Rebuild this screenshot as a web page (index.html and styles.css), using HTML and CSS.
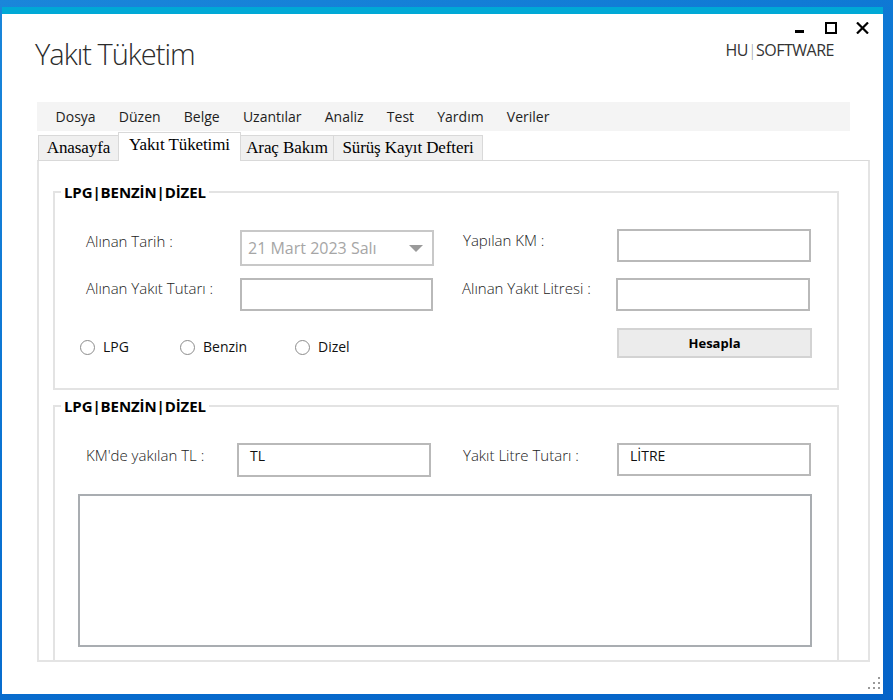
FILE: index.html
```html
<!DOCTYPE html>
<html lang="tr">
<head>
<meta charset="utf-8">
<title>Yakıt Tüketim</title>
<link rel="stylesheet" href="styles.css">
</head>
<body>
<div class="window">
  <div class="header">
    <h1 class="title">Yakıt Tüketim</h1>
    <div class="header-right">
      <svg class="controls" width="74" height="12" viewBox="0 0 74 12">
        <rect x="0" y="8" width="9" height="3" fill="#000"/>
        <rect x="31" y="1" width="10" height="10" fill="none" stroke="#000" stroke-width="2"/>
        <path d="M62 0.5 L73 11.5 M73 0.5 L62 11.5" stroke="#000" stroke-width="2.2" fill="none"/>
      </svg>
      <div class="brand">HU<span class="pipe">|</span>SOFTWARE</div>
    </div>
  </div>

  <nav class="menubar">
    <span class="mi">Dosya</span>
    <span class="mi">Düzen</span>
    <span class="mi">Belge</span>
    <span class="mi">Uzantılar</span>
    <span class="mi">Analiz</span>
    <span class="mi">Test</span>
    <span class="mi">Yardım</span>
    <span class="mi">Veriler</span>
  </nav>

  <div class="tabs">
    <div class="tab t1">Anasayfa</div>
    <div class="tab active t2">Yakıt Tüketimi</div>
    <div class="tab t3">Araç Bakım</div>
    <div class="tab t4">Sürüş Kayıt Defteri</div>
  </div>

  <div class="tabpage">
    <div class="group g1">
      <div class="gtitle">LPG|BENZİN|DİZEL</div>
      <div class="row r1">
        <div class="lbl l1 up2">Alınan Tarih :</div>
        <div class="date">
          <span class="date-text">21 Mart 2023 Salı</span>
          <svg class="arrow" width="14" height="7" viewBox="0 0 14 7"><path d="M0 0 H14 L7 7 Z" fill="#9a9a9a"/></svg>
        </div>
        <div class="lbl l2 up2b">Yapılan KM :</div>
        <div class="tb tb-r"></div>
      </div>
      <div class="row r2">
        <div class="lbl l1">Alınan Yakıt Tutarı :</div>
        <div class="tb tb-l"></div>
        <div class="lbl l2">Alınan Yakıt Litresi :</div>
        <div class="tb tb-r"></div>
      </div>
      <div class="row r3">
        <div class="radios">
          <label class="radio rd1"><span class="circle"></span>LPG</label>
          <label class="radio rd2"><span class="circle"></span>Benzin</label>
          <label class="radio rd3"><span class="circle"></span>Dizel</label>
        </div>
        <div class="btn">Hesapla</div>
      </div>
    </div>

    <div class="group g2">
      <div class="gtitle">LPG|BENZİN|DİZEL</div>
      <div class="row r4">
        <div class="lbl l1b">KM'de yakılan TL :</div>
        <div class="tb tb-tl"><span class="tbtext">TL</span></div>
        <div class="lbl l2b">Yakıt Litre Tutarı :</div>
        <div class="tb tb-r2"><span class="tbtext">LİTRE</span></div>
      </div>
      <div class="multi"></div>
    </div>
  </div>

  <svg class="grip" width="12" height="12" viewBox="0 0 12 12">
    <rect x="10" y="0" width="2" height="2" fill="#9a9a9a"/>
    <rect x="5" y="5" width="2" height="2" fill="#9a9a9a"/>
    <rect x="10" y="5" width="2" height="2" fill="#9a9a9a"/>
    <rect x="0" y="10" width="2" height="2" fill="#9a9a9a"/>
    <rect x="5" y="10" width="2" height="2" fill="#9a9a9a"/>
    <rect x="10" y="10" width="2" height="2" fill="#9a9a9a"/>
  </svg>
</div>
</body>
</html>
```

FILE: styles.css
```css
* { box-sizing: border-box; }

html, body { height: 100%; }

body {
  margin: 0;
  width: 893px;
  height: 700px;
  padding: 7px 10px 6px 2px;
  background: linear-gradient(160deg, #1a86da 0%, #0a73d2 45%, #0563c8 100%);
  font-family: "Open Sans", "Liberation Sans", sans-serif;
  overflow: hidden;
}

.window {
  position: relative;
  width: 881px;
  height: 687px;
  background: #fff;
  border-top: 7px solid #00a9d6;
}

/* header */
.header {
  display: flex;
  height: 88px;
  padding-left: 33px;
}

.title {
  margin: 0;
  padding-top: 21px;
  font-family: "Open Sans", sans-serif;
  font-weight: 300;
  font-size: 29px;
  line-height: 38px;
  letter-spacing: -1px;
  color: #2b2b2b;
}

.header-right {
  margin-left: auto;
  display: flex;
  flex-direction: column;
  align-items: flex-end;
  padding-top: 8px;
  padding-right: 14px;
}

.controls { display: block; }

.brand {
  margin-top: 6px;
  margin-right: 35px;
  font-size: 16px;
  line-height: 20px;
  color: #333;
  letter-spacing: -0.5px;
}

.pipe {
  color: #9a9a9a;
  font-weight: 300;
}

/* menu */
.menubar {
  display: flex;
  margin-left: 35px;
  width: 813px;
  height: 29px;
  padding-left: 7px;
  background: #f4f4f4;
}

.mi {
  padding: 0 11.6px;
  font-size: 14px;
  line-height: 29px;
  color: #1e1e1e;
}

/* tabs */
.tabs {
  display: flex;
  align-items: flex-end;
  height: 29px;
  margin-left: 36px;
}

.tab {
  height: 25px;
  border: 1px solid #d9d9d9;
  border-bottom: none;
  background: #f0f0f0;
  font-family: "Liberation Serif", "Times New Roman", serif;
  font-size: 17px;
  line-height: 23px;
  text-align: center;
  color: #000;
  margin-left: -1px;
  white-space: nowrap;
  letter-spacing: -0.1px;
}

.t1 { width: 81px; margin-left: 0; }
.t2 { width: 123px; }
.t3 { width: 94px; }
.t4 { width: 150px; }

.tab.active {
  position: relative;
  z-index: 1;
  height: 29px;
  margin-bottom: -1px;
  background: #fff;
}

/* tab page */
.tabpage {
  margin-left: 35px;
  width: 833px;
  height: 502px;
  border: 2px solid #e4e4e4;
  border-top: 1px solid #d9d9d9;
  padding: 30px 0 0 14px;
  overflow: hidden;
}

.group {
  width: 786px;
  border: 2px solid #e3e3e3;
  padding-left: 25px;
}

.g1 { height: 199px; }
.g2 { height: 300px; margin-top: 15px; }

.gtitle {
  width: fit-content;
  margin: -11px 0 0 -19px;
  padding: 0 3px;
  background: #fff;
  font-weight: 700;
  font-size: 15px;
  line-height: 20px;
  letter-spacing: -0.1px;
  color: #000;
}

.row {
  display: flex;
  align-items: flex-start;
}

.r1 { margin-top: 27px; padding-left: 6px; }
.r2 { margin-top: 12px; padding-left: 6px; }
.r3 { margin-top: 17px; padding-right: 25px; }
.r4 { margin-top: 27px; padding-left: 6px; }

.lbl {
  font-weight: 300;
  font-size: 15px;
  line-height: 20px;
  color: #222;
  white-space: nowrap;
}

.l1 { width: 154px; }
.l2 { width: 154px; margin-left: 29px; }
.l1b { width: 151px; margin-top: 2px; }
.l2b { width: 154px; margin-left: 32px; margin-top: 2px; }
.up2 { margin-top: 2px; }
.up2b { margin-top: 1px; }

.date {
  display: flex;
  align-items: center;
  width: 194px;
  height: 36px;
  margin-top: 1px;
  border: 2px solid #c8c8c8;
  padding: 0 9px 0 6px;
}

.date-text {
  font-size: 16px;
  color: #a6a6a6;
  white-space: nowrap;
}

.arrow { margin-left: auto; display: block; }

.tb {
  height: 33px;
  border: 2px solid #b9b9b9;
  background: #fff;
}

.tb-l { width: 193px; }
.tb-r { width: 194px; }
.tb-tl { width: 194px; height: 34px; }
.tb-r2 { width: 194px; }

.tbtext {
  display: block;
  padding: 1px 0 0 11px;
  font-size: 14px;
  line-height: 20px;
  color: #111;
}

.radios {
  display: flex;
  margin-top: 9px;
}

.radio {
  display: flex;
  align-items: center;
  gap: 8px;
  font-size: 14px;
  line-height: 20px;
  color: #111;
}

.rd1 { width: 100px; }
.rd2 { width: 115px; }

.circle {
  width: 15px;
  height: 15px;
  border: 1px solid #8c8c8c;
  border-radius: 50%;
  background: #fff;
}

.btn {
  margin-left: auto;
  width: 195px;
  height: 30px;
  border: 2px solid #d3d3d3;
  background: #ececec;
  font-weight: 700;
  font-size: 13px;
  line-height: 26px;
  text-align: center;
  color: #000;
}

.multi {
  margin: 17px 0 0 -2px;
  width: 734px;
  height: 153px;
  border: 2px solid #a9adb1;
}

.grip {
  position: absolute;
  right: 3px;
  bottom: 5px;
}
```
